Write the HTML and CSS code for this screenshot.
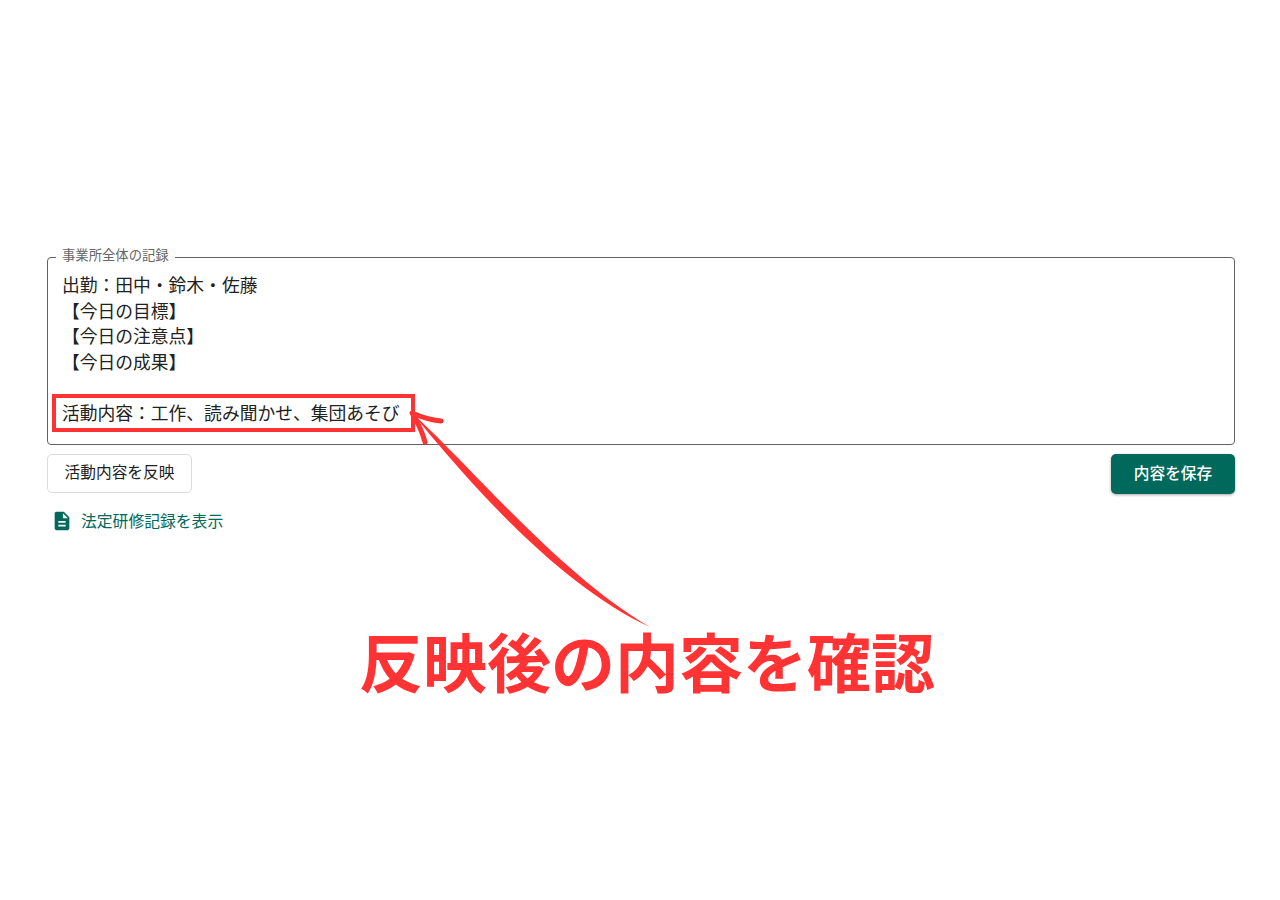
FILE: index.html
```html
<!DOCTYPE html>
<html lang="ja">
<head>
<meta charset="utf-8">
<title>事業所全体の記録</title>
<link rel="stylesheet" href="styles.css">
</head>
<body>
<main class="page">
  <fieldset class="record">
    <legend class="record-label">事業所全体の記録</legend>
    <div class="record-text">出勤：田中・鈴木・佐藤
【今日の目標】
【今日の注意点】
【今日の成果】

活動内容：工作、読み聞かせ、集団あそび</div>
  </fieldset>
  <div class="actions">
    <button class="btn btn-outline">活動内容を反映</button>
    <button class="btn btn-primary">内容を保存</button>
  </div>
  <a class="doc-link" href="#">
    <svg class="doc-icon" viewBox="0 0 24 24" aria-hidden="true"><path d="M14 2H6c-1.1 0-2 .9-2 2v16c0 1.1.9 2 2 2h12c1.1 0 2-.9 2-2V8l-6-6zm2 16H8v-2h8v2zm0-4H8v-2h8v2zm-3-5V3.5L18.5 9H13z"/></svg>
    <span>法定研修記録を表示</span>
  </a>
</main>
<div class="callout-box"></div>
<svg class="callout-arrow" viewBox="0 0 1280 900" aria-hidden="true">
  <path class="arrow-body" d="M412 413 C 470 465, 560 575, 650 627 C 557 584, 467 480, 412 413 Z"/>
  <path class="arrow-head" d="M441 421 C 431 420, 421 417, 412 413 C 417 421, 422 431, 425 442"/>
</svg>
<p class="callout-text">反映後の内容を確認</p>
</body>
</html>
```

FILE: styles.css
```css
* { box-sizing: border-box; }
html, body { margin: 0; background: #fff; }
body {
  width: 1280px;
  height: 900px;
  position: relative;
  overflow: hidden;
  font-family: "Noto Sans CJK JP", Roboto, "Noto Sans", sans-serif;
  color: #212121;
}
.page { padding: 247px 45px 0 47px; }
.record {
  margin: 0;
  padding: 5px 14px 15px 14px;
  height: 198px;
  border: 1px solid #616161;
  border-radius: 4px;
  min-width: 0;
}
.record-label {
  margin-left: -6px;
  padding: 0 6px 4px;
  font-size: 13.33px;
  line-height: 16px;
  color: #666;
}
.record-text {
  white-space: pre-wrap;
  font-size: 17.78px;
  line-height: 25.6px;
  color: #212121;
}
.actions {
  display: flex;
  justify-content: space-between;
  margin-top: 9px;
}
.btn {
  font-family: inherit;
  font-size: 15.7px;
  font-weight: 400;
  line-height: 20px;
  border-radius: 5px;
  padding: 0 0 3px;
  cursor: pointer;
}
.btn-outline {
  width: 145px;
  height: 39px;
  background: #fff;
  color: #212121;
  border: 1px solid #dcdcdc;
}
.btn-primary {
  width: 124px;
  height: 40px;
  background: #00695c;
  color: #fff;
  border: 0;
  font-weight: 500;
  box-shadow: 0 1px 3px rgba(0, 0, 0, .35);
}
.doc-link {
  display: flex;
  align-items: center;
  gap: 8px;
  margin: 15px 0 0 4px;
  color: #00695c;
  font-size: 15.8px;
  line-height: 24px;
  text-decoration: none;
}
.doc-icon { width: 22px; height: 22px; fill: #00695c; flex: none; }
.callout-box {
  position: absolute;
  left: 52px;
  top: 394px;
  width: 363px;
  height: 38px;
  border: 4px solid #ff3333;
}
.callout-arrow {
  position: absolute;
  left: 0;
  top: 0;
  width: 1280px;
  height: 900px;
}
.arrow-body { fill: #ff3333; }
.arrow-head { fill: none; stroke: #ff3333; stroke-width: 5; stroke-linecap: round; stroke-linejoin: round; }
.callout-text {
  position: absolute;
  left: 359px;
  top: 613px;
  margin: 0;
  font-family: "Noto Sans CJK JP", sans-serif;
  font-weight: 700;
  font-size: 64px;
  line-height: 92px;
  color: #ff3333;
  white-space: nowrap;
}
```
